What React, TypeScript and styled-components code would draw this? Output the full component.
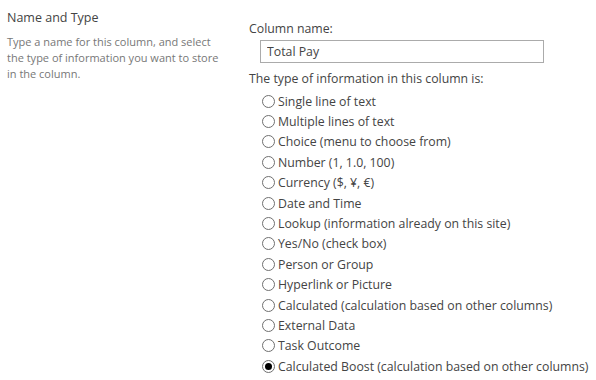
import React, { useState } from 'react';
import styled, { createGlobalStyle } from 'styled-components';

const GlobalStyle = createGlobalStyle`
  html, body {
    margin: 0;
    padding: 0;
    background: #ffffff;
  }
  body {
    font-family: 'Open Sans', 'Noto Sans', 'Liberation Sans', sans-serif;
    color: #444444;
  }
`;

const columnTypes = [
  'Single line of text',
  'Multiple lines of text',
  'Choice (menu to choose from)',
  'Number (1, 1.0, 100)',
  'Currency ($, ¥, €)',
  'Date and Time',
  'Lookup (information already on this site)',
  'Yes/No (check box)',
  'Person or Group',
  'Hyperlink or Picture',
  'Calculated (calculation based on other columns)',
  'External Data',
  'Task Outcome',
  'Calculated Boost (calculation based on other columns)',
];

const App = () => {
  const [name, setName] = useState('Total Pay');
  const [selected, setSelected] = useState(columnTypes.length - 1);

  return (
    <>
      <GlobalStyle />
      <Section>
        <SectionInfo>
          <SectionTitle>Name and Type</SectionTitle>
          <SectionDescription>
            Type a name for this column, and select the type of information you
            want to store in the column.
          </SectionDescription>
        </SectionInfo>
        <SectionFields>
          <FieldLabel htmlFor="column-name">Column name:</FieldLabel>
          <TextInput
            id="column-name"
            value={name}
            onChange={(e) => setName(e.target.value)}
          />
          <FieldLabel as="div">The type of information in this column is:</FieldLabel>
          <RadioList>
            {columnTypes.map((type, i) => (
              <RadioRow key={type}>
                <Radio
                  type="radio"
                  name="column-type"
                  checked={selected === i}
                  onChange={() => setSelected(i)}
                />
                {type}
              </RadioRow>
            ))}
          </RadioList>
        </SectionFields>
      </Section>
    </>
  );
};

export default App;

const Section = styled.div`
  display: grid;
  grid-template-columns: 242px 1fr;
  padding-left: 7px;
  width: 596px;
  box-sizing: border-box;
`;

const SectionInfo = styled.div`
  padding-top: 9px;
  padding-right: 20px;
`;

const SectionTitle = styled.div`
  font-size: 12.5px;
  line-height: 17px;
  color: #444444;
  margin-bottom: 8px;
`;

const SectionDescription = styled.div`
  font-size: 11px;
  line-height: 16px;
  color: #777777;
`;

const SectionFields = styled.div`
  display: flex;
  flex-direction: column;
  align-items: flex-start;
  padding-top: 20px;
`;

const FieldLabel = styled.label`
  font-size: 12.3px;
  line-height: 17px;
  color: #444444;
`;

const TextInput = styled.input`
  box-sizing: border-box;
  width: 284px;
  height: 23px;
  margin: 3px 0 7px 11px;
  padding: 0 6px;
  border: 1px solid #ababab;
  font-family: inherit;
  font-size: 12.3px;
  color: #444444;
  outline: none;
`;

const RadioList = styled.div`
  display: flex;
  flex-direction: column;
  padding-left: 13px;
  padding-top: 4px;
`;

const RadioRow = styled.label`
  display: flex;
  align-items: center;
  gap: 3px;
  height: 20.4px;
  font-size: 12.3px;
  color: #444444;
  white-space: nowrap;
`;

const Radio = styled.input`
  appearance: none;
  box-sizing: border-box;
  width: 13px;
  height: 13px;
  margin: 0;
  border: 1px solid #6f6f6f;
  border-radius: 50%;
  background: #ffffff;
  display: grid;
  place-items: center;

  &:checked::after {
    content: '';
    width: 7px;
    height: 7px;
    border-radius: 50%;
    background: #000000;
  }
`;
